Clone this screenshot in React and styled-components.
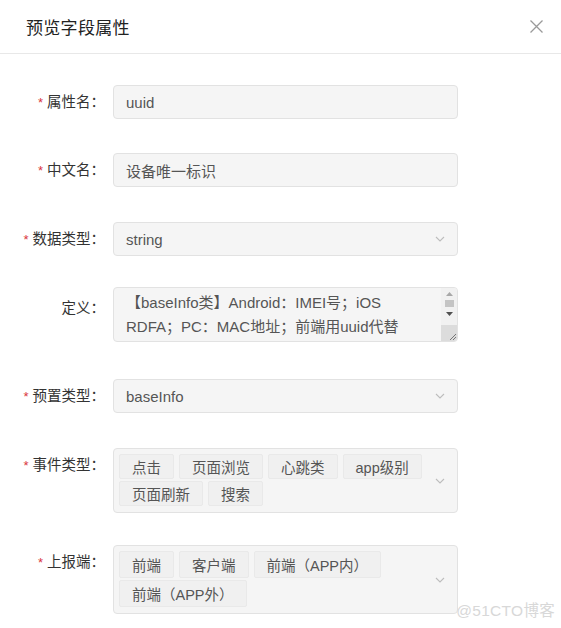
import styled, { createGlobalStyle } from 'styled-components';

const GlobalStyle = createGlobalStyle`
  html, body {
    margin: 0;
    padding: 0;
    background: #ffffff;
  }

  body {
    font-family: "Liberation Sans", "Noto Sans CJK SC", sans-serif;
    color: #333;
  }
`;

const Dialog = styled.div`
  position: relative;
  width: 561px;
  height: 628px;
  background: #fff;
  overflow: hidden;
`;

const Header = styled.header`
  height: 53px;
  padding: 0 14px 0 26px;
  display: flex;
  align-items: center;
  justify-content: space-between;
  border-bottom: 1px solid #e8e8e8;
`;

const Title = styled.h2`
  margin: 0;
  font-size: 17px;
  font-weight: 400;
  color: #222;
  letter-spacing: 0.3px;
`;

const CloseButton = styled.button`
  width: 22px;
  height: 22px;
  padding: 0;
  border: 0;
  background: none;
  display: flex;
  align-items: center;
  justify-content: center;
  color: #9a9a9a;
  cursor: pointer;
`;

const Form = styled.form`
  padding: 31px 0 0;
`;

const Row = styled.div`
  display: grid;
  grid-template-columns: 105px 345px;
  column-gap: 8px;
  align-items: start;
  margin-bottom: ${(p) => p.$gap || 34}px;
`;

const Label = styled.label`
  height: 34px;
  line-height: 34px;
  padding-top: ${(p) => p.$offset || 0}px;
  text-align: right;
  font-size: 14.5px;
  color: #333;
  white-space: nowrap;
`;

const Star = styled.span`
  color: #d9363e;
  margin-right: 4px;
  font-size: 13px;
`;

const Field = styled.div`
  position: relative;
  box-sizing: border-box;
  height: 34px;
  padding: 0 12px;
  display: flex;
  align-items: center;
  background: #f5f5f5;
  border: 1px solid #e2e2e2;
  border-radius: 4px;
  font-size: 15px;
  color: #555;
`;

const Arrow = styled.span`
  position: absolute;
  right: 12px;
  top: 50%;
  transform: translateY(-50%);
  display: flex;
  color: #bdbdbd;
`;

const TextBox = styled.div`
  position: relative;
  box-sizing: border-box;
  height: 55px;
  padding: 3px 22px 0 12px;
  background: #f5f5f5;
  border: 1px solid #e2e2e2;
  border-radius: 4px;
  font-size: 15px;
  line-height: 24px;
  color: #555;
  overflow: hidden;
`;

const ScrollBar = styled.div`
  position: absolute;
  top: 0;
  right: 0;
  bottom: 0;
  width: 16px;
  display: flex;
  flex-direction: column;
  align-items: center;
  background: #f1f1f1;
`;

const ScrollBtn = styled.span`
  height: 11px;
  display: flex;
  align-items: center;
  justify-content: center;
  color: ${(p) => (p.$dim ? '#a8a8a8' : '#505050')};
`;

const Thumb = styled.span`
  width: 9px;
  height: 7px;
  margin: 1px 0;
  background: #c4c4c4;
`;

const Grip = styled.span`
  margin-top: auto;
  width: 16px;
  height: 16px;
  display: flex;
  align-items: flex-end;
  justify-content: flex-end;
  background: #dcdcdc;
  color: #777;
`;

const MultiBox = styled.div`
  position: relative;
  box-sizing: border-box;
  min-height: ${(p) => p.$height}px;
  padding: 5px 32px 6px 5px;
  display: flex;
  flex-wrap: wrap;
  align-content: flex-start;
  gap: 2px 5px;
  background: #f5f5f5;
  border: 1px solid #e2e2e2;
  border-radius: 4px;
`;

const Tag = styled.span`
  box-sizing: border-box;
  height: ${(p) => p.$h || 25}px;
  padding: 0 12px;
  display: inline-flex;
  align-items: center;
  background: #f0f0f0;
  border: 1px solid #e9e9e9;
  border-radius: 2px;
  font-size: 14.5px;
  color: #555;
  white-space: nowrap;
`;

const Watermark = styled.div`
  position: absolute;
  right: 6px;
  bottom: 8px;
  font-size: 15.5px;
  color: #d8d8d8;
  letter-spacing: 0.3px;
`;

const Chevron = () => (
  <svg width="10" height="6" viewBox="0 0 10 6" fill="none">
    <path d="M1 1l4 4 4-4" stroke="currentColor" strokeWidth="1.1" />
  </svg>
);

const eventTypes = ['点击', '页面浏览', '心跳类', 'app级别', '页面刷新', '搜索'];
const reporters = ['前端', '客户端', '前端（APP内）', '前端（APP外）'];

export default function App() {
  return (
    <Dialog>
      <GlobalStyle />
      <Header>
        <Title>预览字段属性</Title>
        <CloseButton aria-label="close">
          <svg width="15" height="15" viewBox="0 0 15 15" fill="none">
            <path d="M1.5 1.5l12 12M13.5 1.5l-12 12" stroke="currentColor" strokeWidth="1.3" />
          </svg>
        </CloseButton>
      </Header>

      <Form>
        <Row>
          <Label><Star>*</Star>属性名：</Label>
          <Field>uuid</Field>
        </Row>

        <Row $gap={35}>
          <Label><Star>*</Star>中文名：</Label>
          <Field>设备唯一标识</Field>
        </Row>

        <Row $gap={31}>
          <Label><Star>*</Star>数据类型：</Label>
          <Field>
            string
            <Arrow><Chevron /></Arrow>
          </Field>
        </Row>

        <Row $gap={37}>
          <Label $offset={4}>定义：</Label>
          <TextBox>
            【baseInfo类】Android：IMEI号；iOS RDFA；PC：MAC地址；前端用uuid代替
            <ScrollBar>
              <ScrollBtn $dim>
                <svg width="7" height="4" viewBox="0 0 7 4"><path d="M0 4h7L3.5 0z" fill="currentColor" /></svg>
              </ScrollBtn>
              <Thumb />
              <ScrollBtn>
                <svg width="7" height="4" viewBox="0 0 7 4"><path d="M0 0h7L3.5 4z" fill="currentColor" /></svg>
              </ScrollBtn>
              <Grip>
                <svg width="10" height="10" viewBox="0 0 10 10" fill="none">
                  <path d="M9 3L3 9M9 6L6 9" stroke="currentColor" strokeWidth="1" />
                </svg>
              </Grip>
            </ScrollBar>
          </TextBox>
        </Row>

        <Row $gap={35}>
          <Label><Star>*</Star>预置类型：</Label>
          <Field>
            baseInfo
            <Arrow><Chevron /></Arrow>
          </Field>
        </Row>

        <Row $gap={32}>
          <Label><Star>*</Star>事件类型：</Label>
          <MultiBox $height={64}>
            {eventTypes.map((t) => (
              <Tag key={t}>{t}</Tag>
            ))}
            <Arrow><Chevron /></Arrow>
          </MultiBox>
        </Row>

        <Row>
          <Label><Star>*</Star>上报端：</Label>
          <MultiBox $height={69}>
            {reporters.map((t) => (
              <Tag key={t} $h={27}>{t}</Tag>
            ))}
            <Arrow><Chevron /></Arrow>
          </MultiBox>
        </Row>
      </Form>

      <Watermark>@51CTO博客</Watermark>
    </Dialog>
  );
}
